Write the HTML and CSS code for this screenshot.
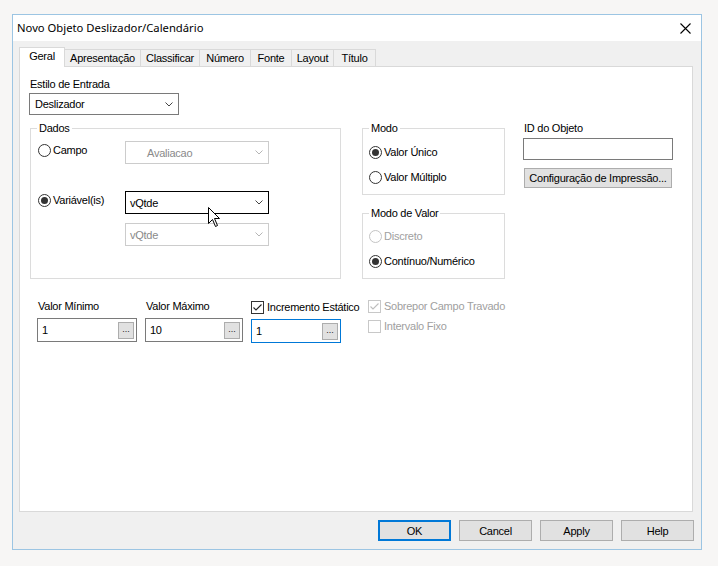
FILE: index.html
```html
<!DOCTYPE html>
<html lang="pt">
<head>
<meta charset="utf-8">
<title>Novo Objeto Deslizador/Calendário</title>
<link rel="stylesheet" href="styles.css">
</head>
<body>
<div class="window">
  <div class="titlebar">
    <span class="title">Novo Objeto Deslizador/Calendário</span>
    <svg class="close" width="11" height="11" viewBox="0 0 11 11"><path d="M0.5 0.5 L10.5 10.5 M10.5 0.5 L0.5 10.5" stroke="#000" stroke-width="1.1" fill="none"/></svg>
  </div>
  <div class="client">
    <div class="tabs">
      <div class="tab active t-geral">Geral</div>
      <div class="tab t-apres">Apresentação</div>
      <div class="tab t-class">Classificar</div>
      <div class="tab t-num">Número</div>
      <div class="tab t-fonte">Fonte</div>
      <div class="tab t-layout">Layout</div>
      <div class="tab t-titulo">Título</div>
    </div>
    <div class="panel">
      <div class="lbl">Estilo de Entrada</div>
      <div class="combo combo-estilo"><span>Deslizador</span><svg class="chev" width="8" height="5" viewBox="0 0 8 5"><polyline points="0.5,0.5 4,4 7.5,0.5" fill="none" stroke="#444"/></svg></div>

      <div class="main">
        <fieldset class="group dados">
          <legend>Dados</legend>
          <div class="dados-grid">
            <label class="radio-item"><span class="radio"></span>Campo</label>
            <div class="combo dcombo disabled"><span class="indent">Avaliacao</span><svg class="chev" width="8" height="5" viewBox="0 0 8 5"><polyline points="0.5,0.5 4,4 7.5,0.5" fill="none" stroke="#b5b5b5"/></svg></div>
            <label class="radio-item r2"><span class="radio checked"></span>Variável(is)</label>
            <div class="combo dcombo hot c2"><span>vQtde</span><svg class="chev" width="8" height="5" viewBox="0 0 8 5"><polyline points="0.5,0.5 4,4 7.5,0.5" fill="none" stroke="#444"/></svg></div>
            <div class="spacer"></div>
            <div class="combo dcombo disabled c3"><span>vQtde</span><svg class="chev" width="8" height="5" viewBox="0 0 8 5"><polyline points="0.5,0.5 4,4 7.5,0.5" fill="none" stroke="#b5b5b5"/></svg></div>
          </div>
        </fieldset>

        <div class="mid">
          <fieldset class="group modo">
            <legend>Modo</legend>
            <div class="radio-list">
              <label class="radio-item"><span class="radio checked"></span>Valor Único</label>
              <label class="radio-item"><span class="radio"></span>Valor Múltiplo</label>
            </div>
          </fieldset>
          <fieldset class="group modo-valor">
            <legend>Modo de Valor</legend>
            <div class="radio-list rl2">
              <label class="radio-item dis"><span class="radio"></span>Discreto</label>
              <label class="radio-item"><span class="radio checked"></span>Contínuo/Numérico</label>
            </div>
          </fieldset>
        </div>

        <div class="right">
          <div class="lbl id-lbl">ID do Objeto</div>
          <div class="tb id-tb"></div>
          <div class="btn cfg">Configuração de Impressão...</div>
        </div>
      </div>

      <div class="bottom">
        <div class="field f1">
          <div class="flabel">Valor Mínimo</div>
          <div class="tb"><span>1</span><span class="ell">...</span></div>
        </div>
        <div class="field f2">
          <div class="flabel">Valor Máximo</div>
          <div class="tb"><span>10</span><span class="ell">...</span></div>
        </div>
        <div class="field f3">
          <label class="check-item"><span class="check"><svg width="13" height="13" viewBox="0 0 13 13"><polyline points="2.5,6.5 5,9 10.5,3.5" fill="none" stroke="#222" stroke-width="1.1"/></svg></span>Incremento Estático</label>
          <div class="tb focus"><span>1</span><span class="ell">...</span></div>
        </div>
        <div class="checks">
          <label class="check-item dis"><span class="check"><svg width="13" height="13" viewBox="0 0 13 13"><polyline points="2.5,6.5 5,9 10.5,3.5" fill="none" stroke="#bdbdbd" stroke-width="1.1"/></svg></span>Sobrepor Campo Travado</label>
          <label class="check-item dis"><span class="check"></span>Intervalo Fixo</label>
        </div>
      </div>

      <svg class="cursor" width="13" height="21" viewBox="0 0 13 21"><path d="M0.5 0.5 L0.5 16.5 L4.5 12.5 L7.5 19.5 L9.5 18.5 L6.5 11.5 L11.5 11.5 Z" fill="#fff" stroke="#000" stroke-width="1" stroke-linejoin="miter"/></svg>
    </div>
    <div class="buttons">
      <div class="btn dlg default">OK</div>
      <div class="btn dlg">Cancel</div>
      <div class="btn dlg">Apply</div>
      <div class="btn dlg">Help</div>
    </div>
  </div>
</div>
</body>
</html>
```

FILE: styles.css
```css
html, body { margin: 0; }
body {
  padding: 14px 16px 0 12px;
  background: #f7f6f5;
  font-family: "Liberation Sans", Arial, sans-serif;
  font-size: 11px;
  letter-spacing: -0.25px;
  color: #000;
}
.window {
  width: 690px;
  height: 536px;
  box-sizing: border-box;
  border: 1px solid #9cc5e3;
  display: flex;
  flex-direction: column;
  background: #f0f0f0;
}
.titlebar {
  flex: none;
  height: 26px;
  background: #fff;
  display: flex;
  align-items: center;
  justify-content: space-between;
  padding: 0 10px 0 4px;
}
.title {
  font-family: "Noto Sans", "Open Sans", sans-serif;
  font-size: 11.25px;
  letter-spacing: 0;
  line-height: 16px;
}
.close { display: block; }
.client {
  flex: 1;
  padding: 6px 8px 8px 6px;
  display: flex;
  flex-direction: column;
}
.tabs {
  display: flex;
  align-items: flex-end;
  height: 20px;
  margin-bottom: -1px;
  position: relative;
  z-index: 1;
}
.tab {
  box-sizing: border-box;
  height: 17px;
  margin-bottom: 1px;
  margin-left: -1px;
  border: 1px solid #d9d9d9;
  border-bottom: none;
  background: #f0f0f0;
  display: flex;
  align-items: center;
  justify-content: center;
  line-height: 13px;
  padding-top: 1px;
}
.tab.active {
  height: 20px;
  margin-bottom: 0;
  margin-left: 0;
  background: #fff;
  position: relative;
  z-index: 2;
  padding-top: 0;
  padding-bottom: 2px;
}
.t-geral { width: 46px; }
.t-apres { width: 77px; }
.t-class { width: 60px; }
.t-num { width: 52px; }
.t-fonte { width: 42px; }
.t-layout { width: 43px; }
.t-titulo { width: 43px; }

.panel {
  height: 446px;
  box-sizing: border-box;
  border: 1px solid #d9d9d9;
  background: #fff;
  position: relative;
  padding: 11px 9px 0;
}
.lbl { line-height: 13px; padding-left: 1px; }
.combo {
  display: flex;
  align-items: center;
  justify-content: space-between;
  box-sizing: border-box;
  border: 1px solid #7a7a7a;
  background: #fff;
  padding: 0 5px 0 5px;
}
.combo-estilo { width: 150px; height: 22px; margin-top: 2px; }
.chev { display: block; }

.main {
  display: flex;
  align-items: flex-start;
  margin-top: 7px;
}
.group {
  margin: 0;
  padding: 0 0 0 6px;
  border: 1px solid #dcdcdc;
  min-width: 0;
  box-sizing: border-box;
}
.group legend {
  padding: 0 2px;
  line-height: 12px;
}
.group.dados { width: 311px; height: 157px; margin-left: 1px; }
.dados-grid {
  display: grid;
  grid-template-columns: 87px 144px;
  align-items: start;
  padding: 7px 0 0 1px;
}
.dcombo { height: 23px; padding-left: 4px; }
.dcombo.disabled { border-color: #cccccc; color: #8a8a8a; }
.dcombo.hot { border-color: #000; }
.indent { padding-left: 17px; }
.dados-grid .radio-item { margin-top: 3px; }
.dados-grid .radio-item.r2 { margin-top: 30px; }
.dados-grid .c2 { margin-top: 27px; }
.dados-grid .c3 { margin-top: 9px; }

.radio-item {
  display: flex;
  align-items: center;
  gap: 2px;
  height: 13px;
  line-height: 13px;
  white-space: nowrap;
}
.radio {
  width: 13px;
  height: 13px;
  box-sizing: border-box;
  border: 1px solid #333;
  border-radius: 50%;
  background: #fff;
  display: inline-flex;
  align-items: center;
  justify-content: center;
  flex: none;
}
.radio.checked::after {
  content: "";
  width: 7px;
  height: 7px;
  border-radius: 50%;
  background: #333;
}
.radio-item.dis { color: #a0a0a0; }
.radio-item.dis .radio { border-color: #c4c4c4; }

.mid { width: 143px; margin-left: 21px; display: flex; flex-direction: column; }
.group.modo { height: 73px; }
.group.modo-valor { height: 72px; margin-top: 12px; }
.radio-list {
  display: flex;
  flex-direction: column;
  gap: 12px;
  padding-top: 12px;
}
.radio-list.rl2 { padding-top: 11px; }

.right { width: 150px; margin-left: 18px; display: flex; flex-direction: column; }
.id-lbl { line-height: 12px; padding-left: 1px; }
.tb {
  box-sizing: border-box;
  height: 24px;
  border: 1px solid #7a7a7a;
  background: #fff;
  display: flex;
  align-items: center;
  justify-content: space-between;
  padding: 0 2px 0 4px;
}
.tb.focus { border-color: #0078d7; }
.tb.id-tb { height: 22px; margin-top: 4px; }
.btn {
  box-sizing: border-box;
  border: 1px solid #adadad;
  background: #e1e1e1;
  display: flex;
  align-items: center;
  justify-content: center;
  white-space: nowrap;
}
.btn.cfg { width: 148px; height: 20px; margin: 8px 0 0 1px; }

.bottom {
  display: flex;
  align-items: flex-start;
  margin-top: 21px;
  padding-left: 8px;
}
.field { display: flex; flex-direction: column; gap: 5px; }
.flabel { line-height: 13px; padding-left: 1px; }
.f1 { width: 100px; margin-right: 8px; }
.f2 { width: 98px; margin-right: 8px; }
.f3 { width: 90px; margin-right: 27px; }
.ell {
  box-sizing: border-box;
  width: 16px;
  height: 17px;
  border: 1px solid #adadad;
  background: #e1e1e1;
  font-size: 9px;
  letter-spacing: 0;
  line-height: 12px;
  text-align: center;
  color: #222;
}
.check-item {
  display: flex;
  align-items: center;
  gap: 3px;
  height: 13px;
  line-height: 13px;
  margin-top: 1px;
  white-space: nowrap;
}
.check {
  width: 13px;
  height: 13px;
  box-sizing: border-box;
  border: 1px solid #333;
  background: #fff;
  flex: none;
  position: relative;
}
.check svg { position: absolute; left: -1px; top: -1px; }
.check-item.dis { color: #a0a0a0; }
.check-item.dis .check { border-color: #c8c8c8; }
.checks { display: flex; flex-direction: column; gap: 7px; }
.checks .check-item { margin-top: 0; }

.cursor { position: absolute; left: 188px; top: 140px; }

.buttons {
  display: flex;
  justify-content: flex-end;
  gap: 8px;
  margin-top: 8px;
  margin-right: -1px;
}
.btn.dlg { width: 73px; height: 21px; }
.btn.dlg.default { border: 2px solid #0078d7; }
```
